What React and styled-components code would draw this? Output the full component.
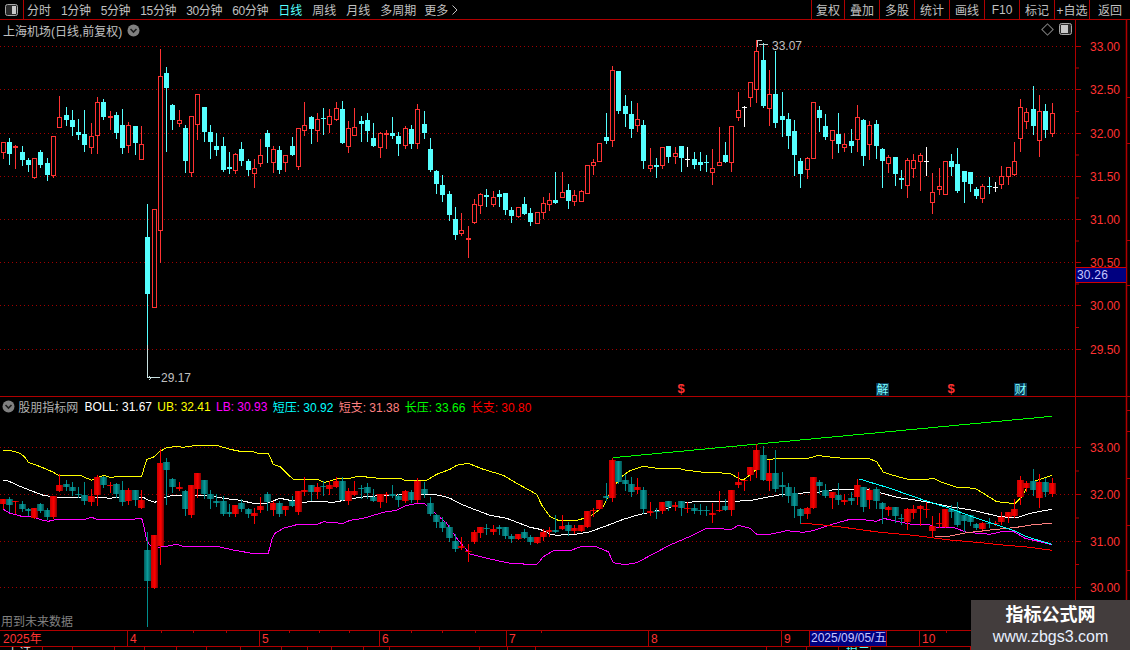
import React from "react";
import styled, { createGlobalStyle } from "styled-components";

// Candles as read off the chart: type, high, top, bottom, low.
// Values are in crop units, y = base + value / 3
const BLOCKS = [
  { base: 40, rows: [
    ["r",307,307,335,354],["c",294,306,342,372],["r",315,318,324,384],["c",318,336,360,375],["c",354,360,375,393],
    ["r",354,355,410,414],["c",330,336,375,381],["c",354,369,405,420],["r",289,289,404,410],["r",168,232,260,260],
    ["c",201,225,240,255],["c",210,240,261,285],["c",237,276,285,297],["c",210,282,315,333],["r",249,289,320,339],
    ["r",171,187,284,339],["c",177,186,231,237],["r",213,228,234,267],["c",216,225,279,294],["c",207,255,324,339],
    ["r",246,256,314,336],["c",258,258,309,342],["r",258,313,356,356],["c",492,591,762,1011],["r",508,508,801,801],
    ["r",27,109,569,666],["c",81,99,144,333],["c",192,195,240,267],["r",210,241,250,258],["c",255,264,363,396],
    ["r",229,229,395,408],["r",163,163,253,297],["c",201,201,276,303],["c",255,276,306,354],["c",279,318,330,345],
    ["c",291,318,390,393],["c",336,381,387,399],["r",340,343,391,399],["c",306,327,363,375],["c",357,363,390,405],
    ["r",357,385,398,441],["r",297,346,368,378],["c",270,279,321,366],["r",318,328,365,396],["c",318,330,390,400],
  ]},
  { base: 80, rows: [
    ["r",225,226,245,273],["c",171,198,225,225],["r",145,145,257,267],["r",66,136,149,165],["c",108,111,147,189],
    ["r",99,118,149,183],["c",84,114,117,162],["r",87,109,131,156],["r",66,85,116,120],["c",63,87,189,189],
    ["r",124,145,197,216],["r",84,142,164,164],["c",108,123,132,183],["c",99,120,153,183],["c",129,174,198,198],
    ["r",156,160,200,231],["r",150,159,165,204],["c",111,159,168,174],["c",156,168,192,225],["r",138,145,194,204],
    ["c",135,147,192,204],["r",72,88,188,204],["c",93,132,159,174],["c",174,207,270,273],["c",270,273,312,339],
    ["c",285,315,345,363],["c",333,342,405,420],["c",381,417,465,477],["r",399,451,458,465],["r",438,474,480,531],
    ["r",357,373,425,428],["r",339,343,374,399],["c",327,345,351,378],["r",333,352,372,378],["c",330,342,351,378],
    ["c",339,339,390,402],["c",381,390,408,426],["r",382,382,407,411],["c",351,372,402,402],["c",384,399,426,435],
    ["r",397,397,428,428],["r",351,370,395,414],["r",339,361,371,390],["c",276,360,369,369],
  ]},
  { base: 40, rows: [
    ["r",396,455,472,472],["c",432,450,483,504],["r",450,466,483,495],["r",450,454,483,483],["r",376,376,458,458],
    ["r",357,365,374,402],["r",310,310,362,362],["c",219,291,303,309],["r",78,91,301,318],["c",93,93,213,219],
    ["c",165,198,222,258],["c",183,222,267,291],["r",189,238,254,273],["c",240,255,363,384],["r",324,376,383,393],
    ["c",354,375,381,411],["r",322,322,374,384],["c",318,318,351,366],["r",321,340,347,369],["c",318,318,354,393],
    ["w",321,357,360,378],["c",336,357,375,384],["c",336,366,375,390],["c",345,366,369,393],["r",327,385,395,432],
    ["r",261,367,374,374],["c",306,345,366,366],["r",259,259,365,393],["r",156,211,231,240],["w",198,201,204,258],
    ["r",127,127,170,198],["r",0,34,146,186],["c",10,60,198,201],["r",90,163,203,255],["c",33,162,249,261],
    ["c",156,228,240,288],["c",219,237,288,324],["c",240,273,345,405],["c",354,363,402,441],["r",351,355,386,414],
    ["r",187,187,353,353],["c",198,210,234,273],["c",222,258,291,297],["r",270,271,300,354],["c",220,282,312,336],
  ]},
  { base: 80, rows: [
    ["r",159,192,201,213],["c",147,183,198,216],["r",75,112,177,213],["c",117,120,228,255],["r",123,135,192,237],
    ["c",120,132,198,234],["c",204,207,243,321],["r",225,232,250,276],["c",231,231,282,315],["c",270,294,300,324],
    ["r",234,240,314,351],["r",222,240,263,291],["r",219,225,242,330],["w",201,243,246,285],["r",279,337,365,399],
    ["r",264,318,327,342],["r",244,244,341,341],["c",222,243,261,286],["c",204,252,333,336],["c",273,273,306,366],
    ["c",276,276,312,333],["c",321,327,348,354],["r",312,319,353,366],["c",291,318,321,339],["w",306,321,324,333],
    ["r",258,289,311,324],["r",262,262,289,312],["r",186,243,282,285],["r",57,82,173,213],["r",84,97,122,144],
    ["c",18,87,138,162],["r",45,94,179,228],["c",72,93,150,171],["r",69,100,160,168],
  ]},
];

const CANDLES = BLOCKS.flatMap(b =>
  b.rows.map(([t, hi, top, bot, lo]) => ({
    t,
    hi: Math.round(b.base + hi / 3),
    top: Math.round(b.base + top / 3),
    bot: Math.round(b.base + bot / 3),
    lo: Math.round(b.base + lo / 3),
  }))
).map((c, i) => ({ ...c, x: Math.floor(3.3 + 6.28 * i) }));

// the lower panel has the same candles on its own price scale
const toLower = y => 447.3 + (y - 46.3) * 0.54;

const seg = (x0, rows) => rows.map(([x, y]) => [x0 + x / 3, 410 + y / 3]);
const toPts = list => list.map(([x, y]) => `${x.toFixed(1)},${y.toFixed(1)}`).join(" ");

const YELLOW = toPts([
  ...seg(0, [[10,121],[30,121],[60,130],[75,142],[85,157],[110,166],[140,178],[160,187],[175,196],[240,196],[275,211],[290,205],[310,196],[330,202],[370,199],[425,199],[440,148],[460,142],[480,124],[500,113],[530,109],[550,112],[590,106],[650,106],[690,118],[720,124],[755,124],[775,130],[805,130],[820,163],[840,170],[860,190],[880,208],[950,208],[975,217],[1000,210],[1020,205]]),
  ...seg(350, [[0,205],[25,199],[60,202],[85,205],[150,205],[165,211],[230,211],[260,193],[300,178],[320,166],[355,160],[400,178],[460,196],[500,220],[560,253],[575,285],[600,320],[625,331],[680,331],[720,320],[760,290],[790,230],[820,196],[840,182],[880,169],[920,175],[985,175],[1010,181],[1060,187],[1140,190],[1165,205],[1180,210]]),
  ...seg(750, [[0,195],[50,150],[80,145],[175,145],[205,136],[220,139],[280,145],[355,145],[380,155],[400,187],[440,199],[475,208],[520,210],[550,205],[575,217],[620,232],[675,235],[700,250],[740,275],[795,281],[815,260],[830,235],[850,215],[880,205],[905,196]]),
]);
const WHITE = toPts([
  ...seg(0, [[10,211],[20,211],[60,229],[90,241],[130,256],[170,262],[240,262],[280,265],[300,262],[330,265],[355,262],[430,262],[445,271],[465,277],[490,265],[510,258],[540,256],[620,256],[670,265],[720,271],[760,280],[800,280],[840,265],[870,271],[910,277],[950,274],[1000,277]]),
  ...seg(350, [[0,268],[30,262],[100,256],[240,253],[270,256],[300,265],[340,285],[370,297],[420,316],[470,325],[540,352],[570,358],[600,372],[620,376],[680,372],[715,367],[770,347],[820,328],[860,316],[900,307],[950,295],[1000,280],[1040,274],[1140,274]]),
  ...seg(750, [[0,272],[50,262],[100,253],[140,250],[200,247],[260,238],[315,238],[340,235],[380,245],[440,262],[520,274],[600,290],[660,299],[750,320],[800,323],[830,313],[860,306],[905,298]]),
]);
const MAGENTA = toPts([
  ...seg(0, [[10,298],[30,310],[65,319],[90,319],[130,331],[145,334],[170,328],[255,328],[275,322],[290,328],[395,328],[425,325],[432,350],[440,390],[450,406],[470,412],[500,409],[530,403],[550,409],[650,409],[700,420],[755,430],[805,430],[815,390],[825,370],[850,355],[890,344],[950,344],[970,335],[1000,338],[1030,340]]),
  ...seg(350, [[0,331],[40,325],[100,307],[140,301],[165,288],[200,280],[225,282],[250,305],[290,340],[320,385],[360,432],[420,447],[480,460],[560,464],[580,440],[610,422],[660,422],[690,411],[735,409],[775,425],[790,458],[825,464],[860,458],[960,405],[1030,375],[1070,355],[1145,358],[1165,346]]),
  ...seg(750, [[0,355],[20,373],[50,375],[110,362],[160,367],[190,362],[250,342],[300,328],[330,328],[380,334],[400,325],[440,334],[480,342],[530,342],[560,352],[610,352],[650,367],[720,373],[760,364],[790,364],[825,385],[870,395],[905,404]]),
]);
const GREEN = toPts([[612.7, 457.7], [1051.7, 416.3]]);
const CYANLINE = toPts(seg(750, [[328,207],[420,235],[520,270],[590,292],[680,325],[800,365],[830,380],[905,403]]));
const REDLINE = toPts(seg(750, [[152,340],[200,343],[280,352],[390,367],[490,376],[600,390],[680,397],[760,405],[840,412],[905,421]]));
const PINK = toPts(seg(750, [[555,380],[600,378],[650,368],[740,358],[800,352],[850,344],[905,340]]));

const UPPER_GRID = [46, 89, 133, 176, 219, 262, 305, 349];
const LOWER_GRID = [447, 494, 541, 587];
const UPPER_SCALE = [["33.00",46],["32.50",89],["32.00",133],["31.50",176],["31.00",219],["30.50",262],["30.00",305],["29.50",349]];
const LOWER_SCALE = [["33.00",447],["32.00",494],["31.00",541],["30.00",587]];

const NAV = ["分时","1分钟","5分钟","15分钟","30分钟","60分钟","日线","周线","月线","多周期"];
const TOOLS = [["复权",33],["叠加",35],["多股",35],["统计",35],["画线",35],["F10",35],["标记",35],["+自选",35],["返回",41]];
const LEGEND = [
  ["BOLL: 31.67","#ffffff"],["UB: 32.41","#ffff00"],["LB: 30.93","#ff00ff"],["短压: 30.92","#00ffff"],
  ["短支: 31.38","#ff8080"],["长压: 33.66","#00ff00"],["长支: 30.80","#ff0000"],
];
const MONTHS = [["2025年",127],["4",132],["5",120],["6",127],["7",142],["8",133],["9",28]];
const TIME_TICKS = [161,193,226,289,319,349,411,442,475,541,946];
const STATUS_EDGES = [43,73,115,145,177,207,241,282,308,332,364,390,480,508,536,767,807,839,871,971];

function UpperCandles() {
  return CANDLES.map((c, i) => {
    const color = c.t === "r" ? "#ff3232" : c.t === "c" ? "#55ffff" : "#ffffff";
    const h = c.bot - c.top;
    return (
      <g key={i}>
        <line x1={c.x + 0.5} x2={c.x + 0.5} y1={c.hi} y2={c.lo + 1} stroke={color} />
        {c.t === "r" && h > 2 ? (
          <rect x={c.x - 1.5} y={c.top + 0.5} width={4} height={h} fill="#000" stroke={color} />
        ) : (
          <rect x={c.x - 2} y={c.top} width={5} height={Math.max(h, 1)} fill={color} />
        )}
      </g>
    );
  });
}

function LowerCandles() {
  return CANDLES.map((c, i) => {
    const up = c.t !== "c";
    const top = Math.round(toLower(c.top));
    const h = Math.max(Math.round(toLower(c.bot)) - top, 1);
    return (
      <g key={i}>
        <line x1={c.x + 0.5} x2={c.x + 0.5} y1={Math.round(toLower(c.hi))} y2={Math.round(toLower(c.lo)) + 1} stroke={up ? "#ff0000" : "#008c8c"} />
        <rect x={c.x - 3} y={top} width={7} height={h} fill={up ? "url(#redBar)" : "url(#tealBar)"} />
      </g>
    );
  });
}

function GridLines({ rows }) {
  return rows.map(y => (
    <line key={y} x1="0" x2="1075" y1={y + 0.5} y2={y + 0.5} stroke="#a00000" strokeDasharray="1 3" shapeRendering="auto" />
  ));
}

function RoundButton() {
  return (
    <svg width="13" height="13" viewBox="0 0 13 13">
      <circle cx="6.5" cy="6.5" r="6" fill="#808080" />
      <path d="M3.5 5 L6.5 8 L9.5 5" fill="none" stroke="#1c1c1c" strokeWidth="1.6" />
    </svg>
  );
}

function SplitIcon({ flip }) {
  return (
    <svg width="13" height="12" viewBox="0 0 13 12">
      <rect x="0.5" y="0.5" width="12" height="11" rx="2" fill="#2a2a2a" stroke="#a8a8a8" />
      <rect x={flip ? 2 : 7} y="2" width={flip ? 7 : 4} height="8" fill="#c8c8c8" />
    </svg>
  );
}

function Chevron() {
  return (
    <svg width="6" height="10" viewBox="0 0 6 10">
      <path d="M0.5 0.5 L5 5 L0.5 9.5" fill="none" stroke="#c0c0c0" />
    </svg>
  );
}

function Marker({ x, y, label }) {
  return (
    <g>
      <rect x={x - 6} y={y - 6} width="13" height="13" fill="#0a3a56" />
      <text x={x + 0.5} y={y + 5} textAnchor="middle" fontSize="12" fill="#7fffff" fontFamily='"Noto Sans CJK SC", sans-serif'>{label}</text>
    </g>
  );
}

function Scale({ rows, offset, height, ticks, nudge }) {
  return (
    <AxisBox $h={height}>
      <AxisSvg width="54" height={height} viewBox={`1076 ${offset} 54 ${height}`}>
        {rows.map(([, y], i) => (
          <g key={y}>
            <line x1="1076" x2="1081" y1={y + 0.5} y2={y + 0.5} stroke="#b00000" />
            {i < rows.length - 1 && (
              <line x1="1076" x2="1079" y1={(y + rows[i + 1][1]) / 2 + 0.5} y2={(y + rows[i + 1][1]) / 2 + 0.5} stroke="#b00000" />
            )}
          </g>
        ))}
        <line x1="1126.5" x2="1126.5" y1={offset} y2={offset + height} stroke="#b00000" strokeWidth="1.5" />
        {ticks.map(y => (
          <line key={y} x1="1127" x2="1130" y1={y + 0.5} y2={y + 0.5} stroke="#b00000" />
        ))}
      </AxisSvg>
      {rows.map(([label, y]) => (
        <AxisLabel key={label} style={{ top: y - offset - 7 + nudge }}>{label}</AxisLabel>
      ))}
    </AxisBox>
  );
}

export default function App() {
  return (
    <Page>
      <GlobalStyle />
      <Toolbar>
        <NavGroup>
          <ToggleCell><SplitIcon flip={false} /></ToggleCell>
          {NAV.map(n => (
            <NavItem key={n} $active={n === "日线"} $digits={/\d/.test(n)}>{n}</NavItem>
          ))}
          <MoreItem>更多 <Chevron /></MoreItem>
        </NavGroup>
        <ToolGroup>
          {TOOLS.map(([label, w]) => (
            <ToolButton key={label} $w={w}>{label}</ToolButton>
          ))}
        </ToolGroup>
      </Toolbar>

      <UpperRow>
        <ChartArea>
          <TitleBar>
            <span>上海机场(日线,前复权)</span>
            <RoundButton />
          </TitleBar>
          <CornerIcons>
            <Diamond />
            <SplitIcon flip />
          </CornerIcons>
          <ChartSvg width="1075" height="376" viewBox="0 20 1075 376" shapeRendering="crispEdges">
            <GridLines rows={UPPER_GRID} />
            <UpperCandles />
            <path d="M757.5 47 V40.5 H762 M759 44 H768" fill="none" stroke="#c8c8c8" />
            <path d="M147.5 345 V377.5 H160 M149 376 L151 378 L149 380" fill="none" stroke="#c8e0e0" />
            <ChartLabel x="772" y="50">33.07</ChartLabel>
            <ChartLabel x="161" y="382">29.17</ChartLabel>
            <MoneyMark x="681" y="393">$</MoneyMark>
            <MoneyMark x="951" y="393">$</MoneyMark>
            <Marker x={882} y={389} label="解" />
            <Marker x={1020} y={389} label="财" />
          </ChartSvg>
        </ChartArea>
        <Scale rows={UPPER_SCALE} offset={20} height={376} ticks={[97, 143, 240, 285]} nudge={1} />
        <CurrentPrice>30.26</CurrentPrice>
      </UpperRow>

      <LowerRow>
        <ChartArea>
          <LegendBar>
            <RoundButton />
            <IndicatorName>股朋指标网</IndicatorName>
            {LEGEND.map(([text, color]) => (
              <LegendValue key={text} $color={color}>{text}</LegendValue>
            ))}
          </LegendBar>
          <FutureNote>用到未来数据</FutureNote>
          <ChartSvg width="1075" height="233" viewBox="0 397 1075 233" shapeRendering="crispEdges">
            <defs>
              <linearGradient id="redBar">
                <stop offset="0" stopColor="#c80000" />
                <stop offset="0.55" stopColor="#ff0000" />
                <stop offset="1" stopColor="#800000" />
              </linearGradient>
              <linearGradient id="tealBar">
                <stop offset="0" stopColor="#005a5a" />
                <stop offset="0.5" stopColor="#0a9a9a" />
                <stop offset="1" stopColor="#005050" />
              </linearGradient>
            </defs>
            <GridLines rows={LOWER_GRID} />
            <polyline points={YELLOW} fill="none" stroke="#ffff00" />
            <polyline points={WHITE} fill="none" stroke="#ffffff" />
            <polyline points={MAGENTA} fill="none" stroke="#ff00ff" />
            <polyline points={GREEN} fill="none" stroke="#00ff00" />
            <polyline points={REDLINE} fill="none" stroke="#ff0000" />
            <LowerCandles />
            <polyline points={PINK} fill="none" stroke="#ff8080" />
            <polyline points={CYANLINE} fill="none" stroke="#00ffff" />
          </ChartSvg>
        </ChartArea>
        <Scale rows={LOWER_SCALE} offset={397} height={233} ticks={[410, 431, 478, 525, 570, 610]} nudge={0.5} />
      </LowerRow>

      <TimeAxis>
        {MONTHS.map(([label, w]) => (
          <TimeCell key={label} $w={w}>{label}</TimeCell>
        ))}
        <DateCell>2025/09/05/五</DateCell>
        <TimeCell $w={32} />
        <TimeCell $w={60}>10</TimeCell>
        {TIME_TICKS.map(x => (
          <TimeTick key={x} style={{ left: x }} />
        ))}
      </TimeAxis>

      <StatusBar>
        {STATUS_EDGES.map((x, i) => (
          <StatusCell key={x} $w={x - (i ? STATUS_EDGES[i - 1] : 0)} $cyan={x === 871}>
            {i === 0 ? "上证" : x === 871 ? "提示" : ""}
          </StatusCell>
        ))}
      </StatusBar>

      <Watermark>
        <WatermarkTitle>指标公式网</WatermarkTitle>
        <WatermarkUrl>www.zbgs3.com</WatermarkUrl>
      </Watermark>
    </Page>
  );
}

const FRAME = "#b00000";
const FONT = '"Liberation Sans", "Noto Sans CJK SC", sans-serif';

const GlobalStyle = createGlobalStyle`
  html, body {
    margin: 0;
    padding: 0;
    background: #000;
    overflow: hidden;
  }
`;

const Page = styled.div`
  position: relative;
  width: 1130px;
  height: 650px;
  overflow: hidden;
  background: #000;
  font-family: ${FONT};
  font-size: 12px;
  display: flex;
  flex-direction: column;
`;

const Toolbar = styled.div`
  height: 19px;
  flex: none;
  display: flex;
  justify-content: space-between;
  border-bottom: 1px solid ${FRAME};
`;

const NavGroup = styled.div`
  display: flex;
  align-items: center;
  gap: 10px;
`;

const ToggleCell = styled.div`
  width: 23px;
  height: 100%;
  margin-right: -7px;
  display: flex;
  align-items: center;
  justify-content: center;
  border-right: 1px solid ${FRAME};
`;

const NavItem = styled.span`
  color: ${p => (p.$active ? "#55ffff" : "#c0c0c0")};
  white-space: nowrap;
  letter-spacing: ${p => (p.$digits ? "-0.35px" : "0")};
`;

const MoreItem = styled.span`
  margin-left: -2px;
  display: flex;
  align-items: center;
  gap: 4px;
  color: #c0c0c0;
  white-space: nowrap;
`;

const ToolGroup = styled.div`
  display: flex;
`;

const ToolButton = styled.div`
  width: ${p => p.$w}px;
  box-sizing: border-box;
  border-left: 1px solid ${FRAME};
  color: #c0c0c0;
  white-space: nowrap;
  display: flex;
  align-items: center;
  justify-content: center;
`;

const UpperRow = styled.div`
  position: relative;
  height: 376px;
  flex: none;
  display: flex;
  border-bottom: 1px solid ${FRAME};
`;

const LowerRow = styled.div`
  height: 233px;
  flex: none;
  display: flex;
  border-bottom: 1px solid ${FRAME};
`;

const ChartArea = styled.div`
  position: relative;
  width: 1075px;
  flex: none;
`;

const ChartSvg = styled.svg`
  display: block;
`;

const ChartLabel = styled.text`
  fill: #c0c0c0;
  font-size: 12px;
`;

const MoneyMark = styled.text`
  fill: #ff3232;
  font-size: 13px;
  font-weight: 700;
  text-anchor: middle;
`;

const TitleBar = styled.div`
  position: absolute;
  left: 3px;
  top: 2px;
  display: flex;
  align-items: center;
  gap: 5px;
  color: #c0c0c0;
  z-index: 1;
`;

const CornerIcons = styled.div`
  position: absolute;
  right: 3px;
  top: 3px;
  display: flex;
  align-items: center;
  gap: 7px;
  z-index: 1;
`;

const Diamond = styled.span`
  width: 7px;
  height: 7px;
  border: 1px solid #808080;
  transform: rotate(45deg);
`;

const AxisBox = styled.div`
  position: relative;
  flex: 1;
  height: ${p => p.$h}px;
  border-left: 1px solid ${FRAME};
`;

const AxisSvg = styled.svg`
  position: absolute;
  left: 0;
  top: 0;
  display: block;
`;

const AxisLabel = styled.span`
  position: absolute;
  left: 14px;
  line-height: 14px;
  color: #ff3232;
`;

const CurrentPrice = styled.div`
  position: absolute;
  left: 1076px;
  top: 247px;
  width: 50px;
  height: 16px;
  box-sizing: border-box;
  padding-left: 1px;
  background: #000080;
  border-top: 1px solid #d00000;
  border-bottom: 1px solid #d00000;
  color: #c8c8ff;
  line-height: 14px;
  letter-spacing: 0.2px;
`;

const LegendBar = styled.div`
  position: absolute;
  left: 2px;
  top: 1px;
  display: flex;
  align-items: center;
  gap: 5.3px;
  white-space: nowrap;
  z-index: 1;
`;

const IndicatorName = styled.span`
  color: #b0b0b0;
  margin-left: -2px;
  margin-right: 1px;
`;

const LegendValue = styled.span`
  color: ${p => p.$color};
`;

const FutureNote = styled.div`
  position: absolute;
  left: 1px;
  bottom: 1px;
  color: #808080;
  z-index: 1;
`;

const TimeAxis = styled.div`
  position: relative;
  height: 15px;
  flex: none;
  display: flex;
  border-bottom: 1px solid ${FRAME};
`;

const TimeCell = styled.div`
  width: ${p => p.$w}px;
  flex: none;
  box-sizing: border-box;
  padding-left: 2px;
  color: #ff3232;
  line-height: 16px;
  &:first-child {
    padding-left: 3px;
  }
  & + & {
    border-left: 1px solid ${FRAME};
  }
`;

const DateCell = styled.div`
  width: 78px;
  flex: none;
  box-sizing: border-box;
  background: #000080;
  border-left: 1px solid ${FRAME};
  border-right: 1px solid ${FRAME};
  color: #c8c8ff;
  line-height: 15px;
  padding-left: 1px;
  white-space: nowrap;
`;

const TimeTick = styled.i`
  position: absolute;
  top: 0;
  width: 1px;
  height: 2px;
  background: ${FRAME};
`;

const StatusBar = styled.div`
  height: 3px;
  flex: none;
  display: flex;
  overflow: hidden;
`;

const StatusCell = styled.div`
  width: ${p => p.$w}px;
  flex: none;
  box-sizing: border-box;
  padding-left: 7px;
  border-right: 1px solid ${FRAME};
  color: ${p => (p.$cyan ? "#55ffff" : "#d8d8d8")};
  line-height: 12px;
  white-space: nowrap;
`;

const Watermark = styled.div`
  position: absolute;
  right: 0;
  bottom: 0;
  width: 159px;
  height: 50px;
  background: #433d3d;
  display: flex;
  flex-direction: column;
  align-items: center;
  z-index: 2;
`;

const WatermarkTitle = styled.div`
  margin-top: 3px;
  color: #ffffff;
  font-size: 18px;
  font-weight: 700;
  line-height: 24px;
`;

const WatermarkUrl = styled.div`
  color: #e8f0ff;
  font-size: 16px;
  line-height: 20px;
`;
